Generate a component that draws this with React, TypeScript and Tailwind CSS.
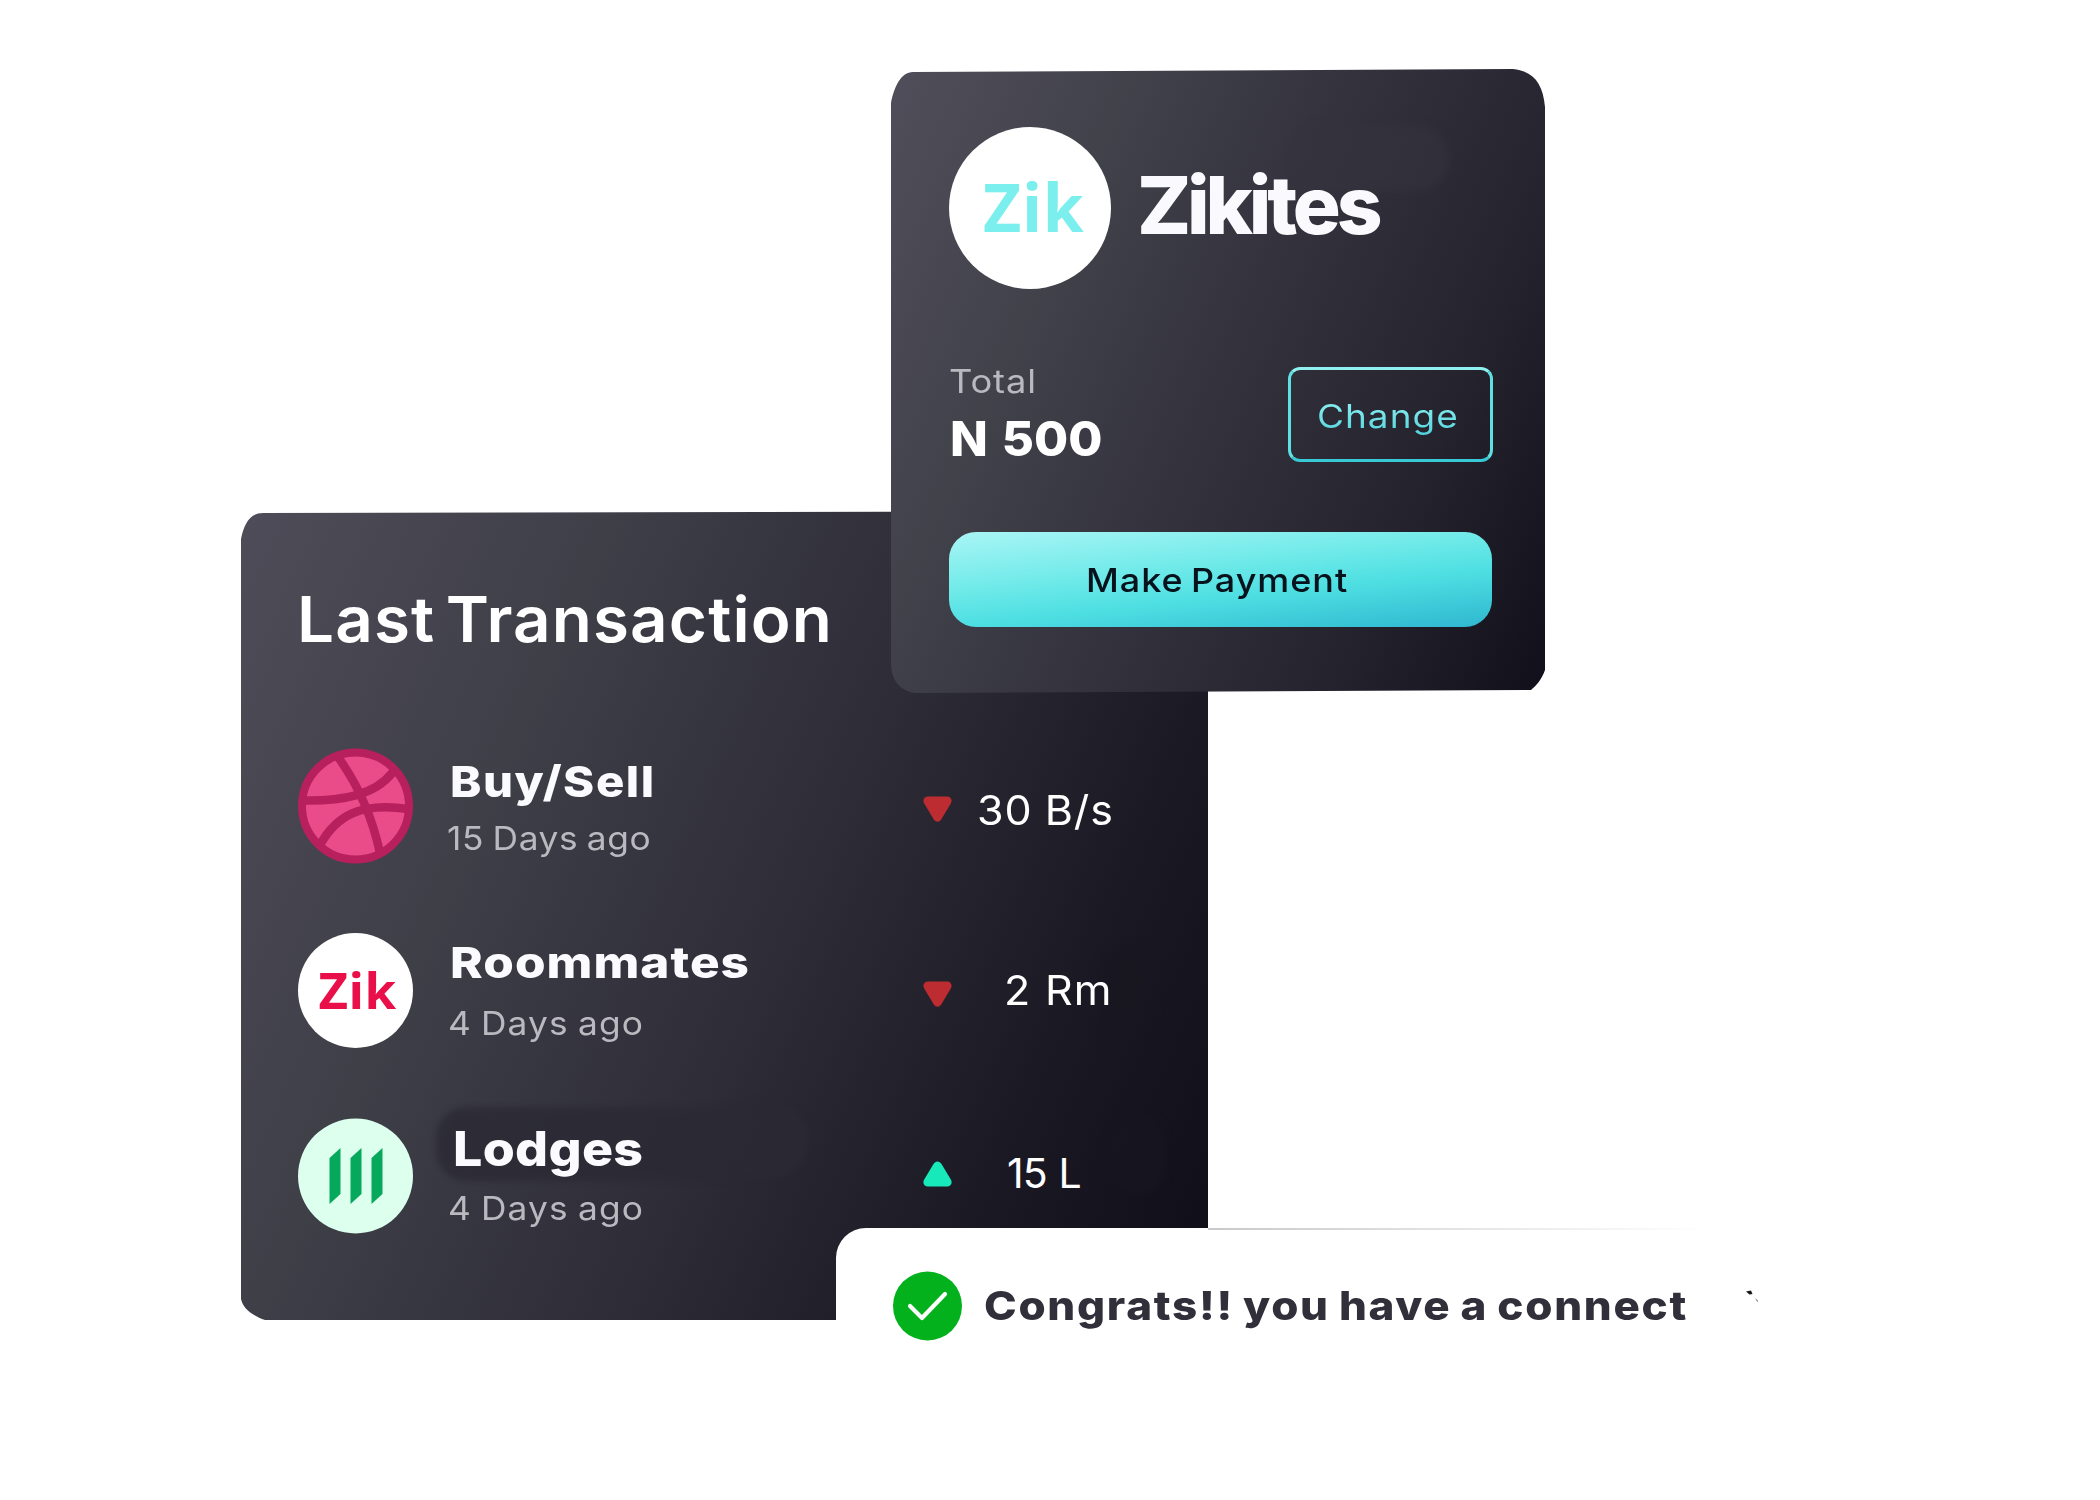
import React from "react";

function DribbbleIcon() {
  return (
    <svg viewBox="0 0 116 116" className="size-[116px] shrink-0" fill="none">
      <circle cx="57.500" cy="58" r="53.500" fill="#ea4c89" stroke="#b7205d" strokeWidth="8" />
      <g stroke="#b7205d" strokeWidth="8.500">
        <path d="M40 9C58 34 74 68 82 105" />
        <path d="M6 52.500C44 53 76 48 95 24" />
        <path d="M22 97C38 68 62 54 110 61" />
      </g>
    </svg>
  );
}

function ZikBadge() {
  return (
    <div className="size-[115px] shrink-0 rounded-full bg-white pl-[20.500px] pt-[31px]">
      <div className="whitespace-nowrap font-['Open_Sans'] text-[51px] font-bold leading-none tracking-[0.4px] text-[#e90f48]">
        Zik
      </div>
    </div>
  );
}

function LodgesIcon() {
  return (
    <svg viewBox="0 0 116 116" className="size-[116px] shrink-0">
      <circle cx="57.500" cy="58" r="57.500" fill="#dcffee" />
      <g fill="#06a95c">
        <path d="M31.500 40L42.500 30V76L31.500 86Z" />
        <path d="M52.500 40L63.500 30V76L52.500 86Z" />
        <path d="M73.500 40L84.500 30V76L73.500 86Z" />
      </g>
    </svg>
  );
}

function Trend({ up }: { up?: boolean }) {
  return (
    <svg
      viewBox="0 0 29 26"
      className={up ? "mt-[43px] h-[26px] w-[29px] shrink-0 rotate-180" : "mt-[48px] h-[26px] w-[29px] shrink-0"}
    >
      <path
        d="M5 0.500H24C28 0.500 30 4.500 27.500 8L18.500 23C16.500 26.500 12.500 26.500 10.500 23L1.500 8C-1 4.500 1 0.500 5 0.500Z"
        fill={up ? "#18e9bb" : "#bd2c30"}
      />
    </svg>
  );
}

interface RowProps {
  icon: React.ReactNode;
  name: string;
  nameClass: string;
  age: string;
  ageClass: string;
  value: string;
  valueClass: string;
  up?: boolean;
}

function Row({ icon, name, nameClass, age, ageClass, value, valueClass, up }: RowProps) {
  return (
    <div className="flex h-[116px] items-start whitespace-nowrap">
      <div className="w-[116px] shrink-0">{icon}</div>
      <div className="ml-[33px] w-[476px] shrink-0">
        <div className="h-[74px]">
          <div className={"origin-left font-extrabold leading-none text-[#fbfbff] " + nameClass}>{name}</div>
        </div>
        <div className={"origin-left scale-x-[1.07] text-[33px] leading-none text-[#bab9bf] [word-spacing:-2px] " + ageClass}>
          {age}
        </div>
      </div>
      <Trend up={up} />
      <div className={"origin-left text-[41px] leading-none text-white " + valueClass}>{value}</div>
    </div>
  );
}

function TransactionCard() {
  return (
    <section className="relative ml-[241px] mt-[511px] h-[809px] w-[967px] bg-[linear-gradient(114deg,#4e4c58_0%,#3f3f48_28%,#2e2d38_54%,#1a1923_80%,#0f0d18_100%)] [clip-path:path('M0_28C3_14_8_2_22_2L967_0V809H24C10_804_2_797_0_788Z')] [grid-area:1/1]">
      <div className="absolute left-[195px] top-[596px] h-[74px] w-[330px] rounded-[30px] bg-[#2b2a34] opacity-80 blur-[3px]" />
      <div className="absolute left-[480px] top-[590px] h-[78px] w-[88px] rounded-full bg-[#2b2a34] opacity-80 blur-[3px]" />
      <div className="absolute left-[870px] top-[604px] h-[80px] w-[54px] rounded-full bg-[#181720] opacity-60 blur-[5px]" />
      <div className="absolute left-[860px] top-[435px] h-[90px] w-[54px] rounded-full bg-[#181720] opacity-60 blur-[5px]" />
      <div className="relative pl-[57px] pt-[77px]">
        <h2 className="-ml-[1.500px] origin-left scale-x-[1.04] whitespace-nowrap text-[63px] font-semibold leading-none tracking-[1.1px] text-white [word-spacing:-7px]">
          Last Transaction
        </h2>
        <div className="mt-[96.500px] flex flex-col gap-[69px]">
          <Row
            icon={<DribbbleIcon />}
            name="Buy/Sell"
            nameClass="ml-[2.500px] pt-[12.500px] text-[43px] tracking-[1.4px] scale-x-[1.1]"
            age="15 Days ago"
            ageClass="tracking-[0.6px]"
            value="30 B/s"
            valueClass="ml-[25px] mt-[42.500px] tracking-[0.9px] scale-x-[1.05] [word-spacing:-1px]"
          />
          <Row
            icon={<ZikBadge />}
            name="Roommates"
            nameClass="ml-[2.500px] pt-[8px] text-[43px] tracking-[0.9px] scale-x-[1.15]"
            age="4 Days ago"
            ageClass="ml-[1px] tracking-[1.1px]"
            value="2 Rm"
            valueClass="ml-[52px] mt-[37px] tracking-[1.2px] scale-x-[1.05]"
          />
          <Row
            icon={<LodgesIcon />}
            name="Lodges"
            nameClass="ml-[5.500px] pt-[7.500px] text-[48px] tracking-[0.3px] scale-x-[1.08]"
            age="4 Days ago"
            ageClass="ml-[1px] tracking-[1.1px]"
            value="15 L"
            valueClass="ml-[55px] mt-[35px] tracking-[-0.9px] [word-spacing:1px]"
            up
          />
        </div>
      </div>
    </section>
  );
}

function PaymentCard() {
  return (
    <section className="relative ml-[891px] mt-[69px] h-[624px] w-[654px] bg-[linear-gradient(114deg,#504e5a_0%,#42424b_26%,#32313c_52%,#24232e_76%,#110f1a_100%)] [clip-path:path('M0_34C3_18_10_3_22_3L622_0C642_2_652_14_654_38V601C651_610_645_617_640_621L24_624C10_622_0_612_0_594Z')] [grid-area:1/1]">
      <div className="absolute left-[400px] top-[56px] h-[66px] w-[158px] rounded-full bg-[#35333e] opacity-60 blur-[5px]" />
      <div className="relative pl-[58px] pr-[52px] pt-[58px]">
        <div className="flex items-start whitespace-nowrap">
          <div className="size-[162px] shrink-0 rounded-full bg-white pl-[34px] pt-[46px]">
            <div className="font-['Open_Sans'] text-[66px] font-bold leading-none tracking-[0.7px] text-[#7beeee]">Zik</div>
          </div>
          <h1 className="ml-[26px] mt-[38px] text-[80px] font-extrabold leading-none tracking-[-4.2px] text-[#fafafe]">
            Zikites
          </h1>
        </div>
        <div className="mt-[75.500px] flex items-start justify-between whitespace-nowrap">
          <div>
            <div className="origin-left scale-x-[1.1] text-[33px] leading-none tracking-[0.8px] text-[#bab9bf]">Total</div>
            <div className="ml-[1px] mt-[17px] origin-left scale-x-[1.03] text-[48px] font-extrabold leading-none text-white [word-spacing:3px]">
              N 500
            </div>
          </div>
          <button className="mt-[2.500px] flex h-[95px] w-[205px] rounded-[12px] border-[3px] border-x-[#5fdfe1] border-b-[#38c9d6] border-t-[#90f0f0] pl-[26px] pt-[30px]">
            <span className="block h-[45px] origin-left scale-x-[1.12] bg-gradient-to-b from-[#8df0f0] to-[#3accd8] bg-clip-text text-[33px] leading-none tracking-[0.9px] text-transparent">
              Change
            </span>
          </button>
        </div>
        <button className="mt-[69px] flex h-[95px] w-[543px] rounded-[27px] bg-[linear-gradient(174deg,#a4f4f4_4%,#74ebea_36%,#4edfe2_62%,#2fb7d0_100%)] pl-[136.500px] pt-[32px]">
          <span className="block origin-left scale-x-[1.09] text-[33px] font-medium leading-none tracking-[0.9px] text-[#06131d] [word-spacing:-3px]">
            Make Payment
          </span>
        </button>
      </div>
    </section>
  );
}

function Toast() {
  return (
    <section className="relative ml-[836px] mt-[1228px] flex h-[155px] w-[922px] items-start whitespace-nowrap rounded-[30px] bg-white pl-[57px] pt-[43px] [grid-area:1/1]">
      <div className="absolute left-[372px] top-0 h-[1.500px] w-[500px] bg-gradient-to-r from-[#c9c9cb] to-transparent" />
      <svg viewBox="0 0 70 70" className="size-[70px] shrink-0" fill="none">
        <circle cx="34.500" cy="35" r="34.500" fill="#03b11d" />
        <path d="M17 35L29 47L52 23" stroke="#fff" strokeWidth="4.200" strokeLinecap="round" strokeLinejoin="round" />
      </svg>
      <p className="ml-[21px] mt-[14.500px] origin-left scale-x-[1.1] text-[40px] font-extrabold leading-none tracking-[1.55px] text-[#302f3a] [word-spacing:-2px]">
        Congrats!! you have a connect
      </p>
      <svg viewBox="0 0 18 16" className="absolute left-[908px] top-[61px] h-[16px] w-[18px]">
        <path d="M2 2.500L7 1.500L8.500 5L5.500 5.500Z" fill="#16151c" />
        <path d="M11 9L14 11.500L13.500 13.500Z" fill="#8b8b90" />
      </svg>
    </section>
  );
}

export default function App() {
  return (
    <main className="grid h-[1500px] w-[2100px] items-start justify-items-start overflow-hidden bg-white font-['Inter',sans-serif]">
      <TransactionCard />
      <PaymentCard />
      <Toast />
    </main>
  );
}
